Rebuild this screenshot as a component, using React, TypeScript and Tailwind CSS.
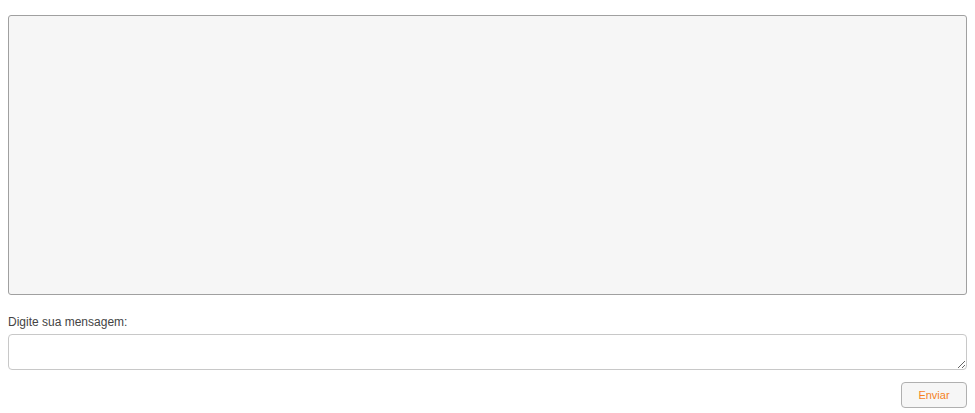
export default function App() {
  return (
    <div className="w-[975px] h-[413px] bg-white px-2 pt-[15px]" style={{ fontFamily: '"Liberation Sans", Arial, sans-serif' }}>
      <div className="h-[280px] w-full bg-[#f6f6f6] border border-[#a0a0a0] rounded-[3px]"></div>
      <div className="mt-[20px] text-[12px] leading-[14px] text-[#444]">Digite sua mensagem:</div>
      <textarea className="mt-[5px] block w-full h-[36px] border border-[#c8c8c8] rounded-[4px] bg-white outline-none resize-y"></textarea>
      <div className="flex justify-end mt-[12px]">
        <button className="w-[66px] h-[26px] rounded-[4px] border border-[#b0b0b0] bg-[#f6f6f6] text-[11px] text-[#f5821f]">Enviar</button>
      </div>
    </div>
  );
}
